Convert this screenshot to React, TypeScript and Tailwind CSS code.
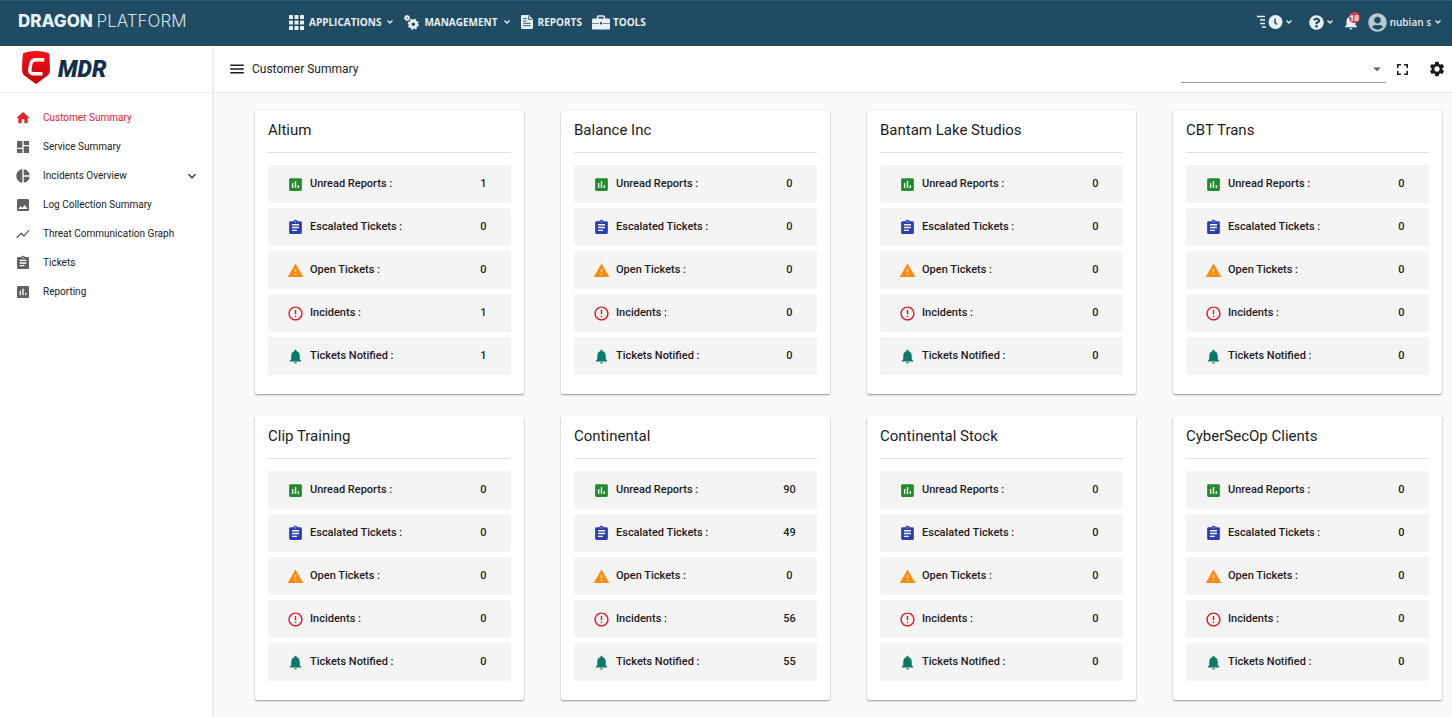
import {
  MdArrowDropDown,
  MdAssessment,
  MdAssignment,
  MdDashboard,
  MdErrorOutline,
  MdExpandMore,
  MdFullscreen,
  MdHome,
  MdImage,
  MdMenu,
  MdNotifications,
  MdPieChart,
  MdSettings,
  MdShowChart,
  MdWarning,
} from "react-icons/md";
import { FaQuestionCircle, FaUserCircle } from "react-icons/fa";

const menu = [
  { label: "Customer Summary", icon: MdHome, active: true },
  { label: "Service Summary", icon: MdDashboard },
  { label: "Incidents Overview", icon: MdPieChart, expandable: true },
  { label: "Log Collection Summary", icon: MdImage },
  { label: "Threat Communication Graph", icon: MdShowChart },
  { label: "Tickets", icon: MdAssignment },
  { label: "Reporting", icon: MdAssessment },
];

const rows = [
  { label: "Unread Reports :", icon: MdAssessment, color: "text-[#218c2b]" },
  { label: "Escalated Tickets :", icon: MdAssignment, color: "text-[#2c3fb1]" },
  { label: "Open Tickets :", icon: MdWarning, color: "text-[#ff8a0c]" },
  { label: "Incidents :", icon: MdErrorOutline, color: "text-[#e3141c]" },
  { label: "Tickets Notified :", icon: MdNotifications, color: "text-[#0b7a68]" },
];

const customers = [
  { name: "Altium", values: [1, 0, 0, 1, 1] },
  { name: "Balance Inc", values: [0, 0, 0, 0, 0] },
  { name: "Bantam Lake Studios", values: [0, 0, 0, 0, 0] },
  { name: "CBT Trans", values: [0, 0, 0, 0, 0] },
  { name: "Clip Training", values: [0, 0, 0, 0, 0] },
  { name: "Continental", values: [90, 49, 0, 56, 55] },
  { name: "Continental Stock", values: [0, 0, 0, 0, 0] },
  { name: "CyberSecOp Clients", values: [0, 0, 0, 0, 0] },
];

function Chevron() {
  return (
    <svg viewBox="0 0 8 6" className="h-[6px] w-2" fill="none" stroke="currentColor" strokeWidth="1.4">
      <path d="M1.5 1.5 4 4l2.5-2.5" />
    </svg>
  );
}

function GridIcon() {
  return (
    <svg viewBox="0 0 15 15" className="size-[15px]" fill="currentColor">
      {[0, 5.5, 11].map((y) =>
        [0, 5.5, 11].map((x) => <rect key={`${x}-${y}`} x={x} y={y} width="4" height="4" rx="0.6" />)
      )}
    </svg>
  );
}

function GearsIcon() {
  return (
    <svg viewBox="0 0 15 15" className="size-[15px]" fill="none" stroke="currentColor">
      <circle cx="9.3" cy="9.2" r="3.2" strokeWidth="2.8" />
      <circle cx="9.3" cy="9.2" r="4.9" strokeWidth="1.4" strokeDasharray="2 1.85" />
      <circle cx="3" cy="3" r="1.7" strokeWidth="1.9" />
      <circle cx="3" cy="3" r="2.6" strokeWidth="0.8" strokeDasharray="1.1 0.95" />
    </svg>
  );
}

function ReportIcon() {
  return (
    <svg viewBox="0 0 12 14" className="h-[14px] w-3">
      <path d="M1.2 0h6.6L12 4.2v8.6c0 .7-.5 1.2-1.2 1.2H1.2C.5 14 0 13.5 0 12.8V1.2C0 .5.5 0 1.2 0z" fill="currentColor" />
      <path d="M7.7.8v3.6h3.5M2.2 3.5h3.5M2.2 6h3.5M2.2 8.3h7.5M2.2 10.7h7.5" fill="none" stroke="#1f4b63" strokeWidth="0.9" />
    </svg>
  );
}

function ToolboxIcon() {
  return (
    <svg viewBox="0 0 18 15" className="h-[15px] w-[18px]">
      <path d="M5.5 4V2.2C5.5 1.5 6 1 6.7 1h4.6c.7 0 1.2.5 1.2 1.2V4" fill="none" stroke="currentColor" strokeWidth="1.5" />
      <rect y="3.5" width="18" height="11" rx="1.2" fill="currentColor" />
      <path d="M0 8.5h7.2M10.8 8.5H18" stroke="#1f4b63" strokeWidth="0.6" />
      <rect x="8" y="7.2" width="2" height="2.2" fill="#1f4b63" />
    </svg>
  );
}

function ClockIcon() {
  return (
    <svg viewBox="0 0 26 14" className="h-[14px] w-[26px]" fill="none" stroke="currentColor">
      <path d="M0 1.5h8M3 5h5M3 8.500h5M5 12h4" strokeWidth="1.4" />
      <circle cx="18.500" cy="7" r="7" fill="currentColor" stroke="none" />
      <path d="M18 3.500v4l2 2" stroke="#1f4b63" strokeWidth="1.500" />
    </svg>
  );
}

function ShieldLogo() {
  return (
    <svg viewBox="0 0 28 33" className="h-[33px] w-7" role="img" aria-label="Comodo">
      <defs>
        <linearGradient id="shield" x1="0" y1="0" x2="0" y2="1">
          <stop offset="0" stopColor="#f5141b" />
          <stop offset="1" stopColor="#c40008" />
        </linearGradient>
      </defs>
      <path
        d="M14 0c4.5 0 9 .7 13 2.3.8 6 1.2 12 .7 18.200-.2 2-1 3.200-2.700 4.500L14 33 3 25C1.300 23.700.5 22.500.3 20.500-.2 14.300.2 8.300 1 2.300 5 .7 9.500 0 14 0z"
        fill="url(#shield)"
      />
      <path
        d="M22.300 8.800h-8.300c-3.200 0-4.600 1.200-5.200 4.200l-1 5.500c-.4 2.700.8 4.300 3.500 4.300h9.200"
        fill="none"
        stroke="#fff"
        strokeWidth="3.400"
      />
    </svg>
  );
}

function Header() {
  return (
    <header className="flex h-[46px] items-center border-t border-[#2f5a70] bg-[#1f4b63] pr-[10px] pl-[18px] pb-[3px] font-['Open_Sans',sans-serif] text-[10px] font-bold text-[#e9f0f4]">
      <a href="#" className="w-[271px] font-[Inter,sans-serif] text-[17px] font-extrabold whitespace-nowrap">
        DRAGON <span className="font-light text-[#d5e0e6]">PLATFORM</span>
      </a>
      <nav className="flex items-center gap-[10px]">
        <button className="flex items-center gap-[5px]">
          <GridIcon />
          APPLICATIONS
          <Chevron />
        </button>
        <button className="flex items-center gap-[5px]">
          <GearsIcon />
          MANAGEMENT
          <Chevron />
        </button>
        <a href="#" className="flex items-center gap-[5px]">
          <ReportIcon />
          REPORTS
        </a>
        <a href="#" className="flex items-center gap-[3px]">
          <ToolboxIcon />
          TOOLS
        </a>
      </nav>
      <div className="ml-auto flex items-center">
        <button aria-label="Recent" className="mr-4 flex items-center gap-[2px]">
          <ClockIcon />
          <Chevron />
        </button>
        <button aria-label="Help" className="mr-2 flex items-center gap-[2px]">
          <FaQuestionCircle size={15} />
          <Chevron />
        </button>
        <button aria-label="Notifications" className="relative mr-2">
          <MdNotifications size={18} />
          <span className="absolute -top-px right-0 flex size-[11px] items-center justify-center rounded-full bg-[#e5394a] text-[8px] leading-none text-white">
            18
          </span>
        </button>
        <button className="flex items-center gap-[3px] text-[10px] font-semibold">
          <FaUserCircle size={19} className="text-[#b9c8d1]" />
          nubian s
          <Chevron />
        </button>
      </div>
    </header>
  );
}

function Sidebar() {
  return (
    <aside className="w-[214px] shrink-0 border-r-2 border-[#efefef] bg-white">
      <a href="#" className="flex h-[47px] items-center gap-2 border-b border-[#ececec] pb-[3px] pl-[22px]">
        <ShieldLogo />
        <span className="pt-1 text-[23px] leading-none font-black text-[#12304a] italic">MDR</span>
      </a>
      <nav className="pt-[10px]">
        {menu.map(({ label, icon: Icon, active, expandable }) => (
          <a
            key={label}
            href="#"
            className={`flex h-[29px] items-center gap-3 pr-3 pl-[15px] text-[10px] ${active ? "text-[#e3242b]" : "text-[#222]"}`}
          >
            <Icon size={16} className={active ? "" : "text-[#616161]"} />
            {label}
            {expandable && <MdExpandMore size={16} className="ml-auto text-[#333]" />}
          </a>
        ))}
      </nav>
    </aside>
  );
}

function CustomerCard({ name, values }: { name: string; values: number[] }) {
  return (
    <section className="rounded-[2px] bg-white px-[13px] pb-[19px] shadow-[0_1px_2px_rgba(0,0,0,0.4)]">
      <h2 className="mb-3 flex h-[43px] items-center border-b border-[#e0e0e0] pb-[2px] text-[15px]">{name}</h2>
      <dl className="flex flex-col gap-[5px]">
        {rows.map(({ label, icon: Icon, color }, i) => (
          <div key={label} className="flex h-[38px] items-center rounded-[2px] bg-[#f4f4f4] pl-[19px] text-[11px] font-medium">
            <Icon size={17} className={color} />
            <dt className="ml-[6px]">{label}</dt>
            <dd className="ml-auto w-[55px] text-center">{values[i]}</dd>
          </div>
        ))}
      </dl>
    </section>
  );
}

export default function App() {
  return (
    <div className="flex min-h-screen flex-col bg-[#fafafa] font-[Roboto,sans-serif] text-[#1c1c1c]">
      <Header />
      <div className="flex flex-1">
        <Sidebar />
        <main className="min-w-0 flex-1">
          <div className="flex h-[47px] items-center border-b border-[#ececec] bg-white pr-[6px] pl-[14px]">
            <button aria-label="Toggle menu">
              <MdMenu size={18} />
            </button>
            <h1 className="ml-[6px] text-[12px]">Customer Summary</h1>
            <div className="relative ml-auto">
              <select
                aria-label="Customer"
                className="h-[27px] w-[205px] appearance-none border-b border-[#949494] bg-transparent text-[12px]"
              />
              <MdArrowDropDown size={18} className="pointer-events-none absolute top-1 right-0 text-[#616161]" />
            </div>
            <button aria-label="Full screen" className="ml-[7px]">
              <MdFullscreen size={19} />
            </button>
            <button aria-label="Settings" className="ml-4">
              <MdSettings size={18} />
            </button>
          </div>
          <div className="grid grid-cols-4 gap-x-[37px] gap-y-[22px] pt-[17px] pr-[10px] pb-4 pl-[41px]">
            {customers.map((customer) => (
              <CustomerCard key={customer.name} {...customer} />
            ))}
          </div>
        </main>
      </div>
    </div>
  );
}
